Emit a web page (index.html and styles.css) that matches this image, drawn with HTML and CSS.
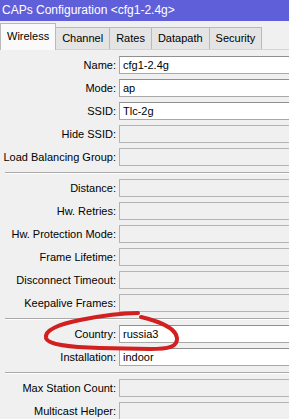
FILE: index.html
```html
<!DOCTYPE html>
<html lang="en">
<head>
    <meta charset="UTF-8">
    <title>CAPs Configuration</title>
    <link rel="stylesheet" href="styles.css">
</head>
<body>
    <div class="window">
        <div class="titlebar">CAPs Configuration &lt;cfg1-2.4g&gt;</div>

        <div class="tabs">
            <div class="tab active">Wireless</div>
            <div class="tab">Channel</div>
            <div class="tab">Rates</div>
            <div class="tab">Datapath</div>
            <div class="tab">Security</div>
        </div>

        <div class="panel">
            <div class="row"><div class="label">Name:</div><div class="field">cfg1-2.4g</div></div>
            <div class="row"><div class="label">Mode:</div><div class="field">ap</div></div>
            <div class="row"><div class="label">SSID:</div><div class="field">Tlc-2g</div></div>
            <div class="row"><div class="label">Hide SSID:</div><div class="field off"></div></div>
            <div class="row"><div class="label">Load Balancing Group:</div><div class="field off"></div></div>
            <div class="sep"></div>
            <div class="row"><div class="label">Distance:</div><div class="field off"></div></div>
            <div class="row"><div class="label">Hw. Retries:</div><div class="field off"></div></div>
            <div class="row"><div class="label">Hw. Protection Mode:</div><div class="field off"></div></div>
            <div class="row"><div class="label">Frame Lifetime:</div><div class="field off"></div></div>
            <div class="row"><div class="label">Disconnect Timeout:</div><div class="field off"></div></div>
            <div class="row"><div class="label">Keepalive Frames:</div><div class="field off"></div></div>
            <div class="sep"></div>
            <div class="row"><div class="label">Country:</div><div class="field">russia3</div></div>
            <div class="row"><div class="label">Installation:</div><div class="field">indoor</div></div>
            <div class="sep"></div>
            <div class="row"><div class="label">Max Station Count:</div><div class="field off"></div></div>
            <div class="row"><div class="label">Multicast Helper:</div><div class="field off"></div></div>
        </div>

        <!-- hand-drawn circle around the Country field -->
        <svg class="mark" width="289" height="419" viewBox="0 0 289 419">
            <path d="M141,317 C158,321 176,328 177,338 C178,347 168,349 150,349 L100,348 C70,347 48,345 46,338 C44,330 60,324 80,320 C100,316 120,313 138,313"
                  fill="none" stroke="#d21f1f" stroke-width="4" stroke-linecap="round"/>
        </svg>
    </div>
</body>
</html>
```

FILE: styles.css
```css
body {
    margin: 0;
    background: #f0f0f0;
    font-family: "Liberation Sans", Arial, sans-serif;
    font-size: 11px;
    color: #000;
}
.window {
    position: relative;
    width: 289px;
    height: 419px;
    overflow: hidden;
    background: #f0f0f0;
}
.titlebar {
    height: 21px;
    line-height: 21px;
    padding-left: 2px;
    background: #5f5fd9;
    color: #fff;
    font-size: 12px;
}
.tabs {
    display: flex;
    align-items: flex-end;
    height: 28px;
    padding-left: 1px;
    border-bottom: 1px solid #d4d4d4;
}
.tab {
    height: 21px;
    line-height: 21px;
    padding: 0 6px;
    background: #e4e4e4;
    border: 1px solid #b9b9b9;
    border-bottom: none;
    margin-left: -1px;
}
.tab.active {
    height: 26px;
    line-height: 24px;
    background: #fafafa;
    margin-bottom: -1px;
    position: relative;
    z-index: 1;
}
.panel {
    display: flex;
    flex-direction: column;
    gap: 5px;
    padding-top: 6px;
}
.row {
    display: flex;
    align-items: center;
    height: 18px;
}
.label {
    width: 116px;
    margin-right: 3px;
    text-align: right;
    white-space: nowrap;
}
.field {
    flex: 1;
    height: 18px;
    box-sizing: border-box;
    margin-right: -4px;
    padding-left: 3px;
    line-height: 16px;
    background: #fff;
    border: 1px solid #a8a8a8;
    border-top-color: #8f8f8f;
}
.field.off {
    background: #f0f0f0;
    border-color: #b4b4b4;
}
.sep {
    margin: 1px 0 0 5px;
    border-top: 1px solid #a9a9a9;
    border-bottom: 1px solid #fff;
}
.mark {
    position: absolute;
    left: 0;
    top: 0;
    pointer-events: none;
}
```
